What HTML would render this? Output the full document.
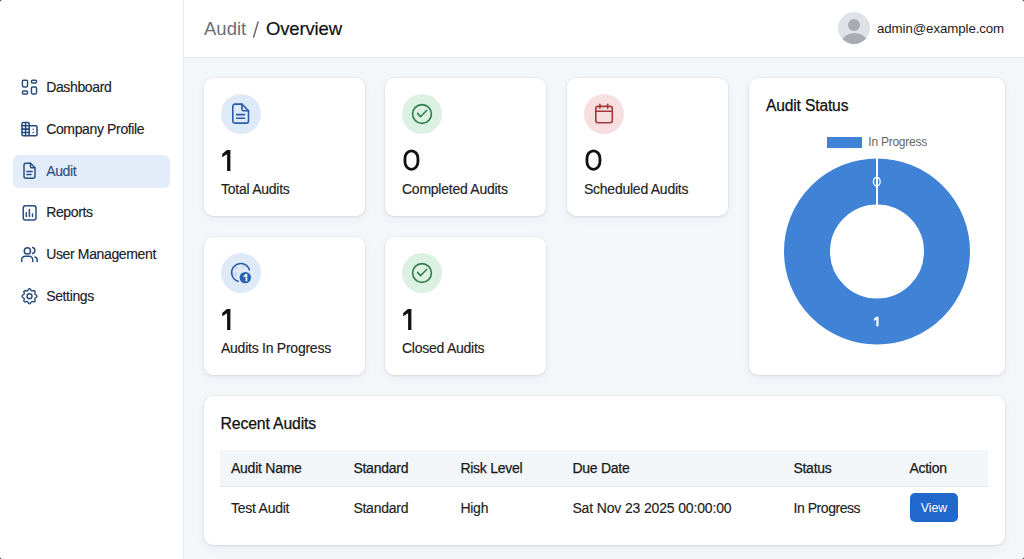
<!DOCTYPE html>
<html><head><meta charset="utf-8">
<style>
*{margin:0;padding:0;box-sizing:border-box}
html,body{width:1024px;height:559px;overflow:hidden}
body{background:#f4f7fa;font-family:"Liberation Sans",sans-serif;color:#1c1d1f;position:relative}
.abs{position:absolute;white-space:nowrap;line-height:1}
#side{position:absolute;left:0;top:0;width:184px;height:559px;background:#fff;border-right:1px solid #e7eaed}
#head{position:absolute;left:184px;top:0;width:840px;height:58px;background:#fff;border-bottom:1px solid #e6e9ec}
.nav{font-size:14px;letter-spacing:-0.36px;color:#202124;-webkit-text-stroke:0.15px currentColor}
.ico{position:absolute;width:16px;height:16px}
.pill{position:absolute;left:12.5px;top:154.5px;width:157.5px;height:33px;background:#e2edf9;border-radius:6px}
.card{position:absolute;background:#fff;border-radius:9px;box-shadow:0 0 0 1px rgba(20,30,50,0.035),0 1px 3px rgba(20,30,50,0.06),0 3px 10px rgba(20,30,50,0.05)}
.circ{position:absolute;width:40px;height:40px;border-radius:50%}
.num{font-size:30px;color:#111}
.lbl{font-size:14px;letter-spacing:-0.25px;color:#222;-webkit-text-stroke:0.15px #222}
.th{font-size:14px;letter-spacing:-0.25px;color:#1a1a1a;-webkit-text-stroke:0.25px #1a1a1a}
.td{font-size:14px;letter-spacing:-0.25px;color:#222;-webkit-text-stroke:0.15px #222}
</style></head><body>
<div id="side"></div>
<div id="head"></div>

<!-- breadcrumb -->
<div class="abs" style="left:204px;top:20.1px;font-size:18.5px;color:#6a6e75">Audit</div>
<svg style="position:absolute;left:0;top:0" width="300" height="60"><path d="M258.1 22L253.6 37" stroke="#6a6e75" stroke-width="1.55" stroke-linecap="round"/></svg>
<div class="abs" style="left:266px;top:20.1px;font-size:18.5px;color:#111;letter-spacing:-0.15px;-webkit-text-stroke:0.2px #111">Overview</div>

<!-- avatar -->
<div style="position:absolute;left:838px;top:12px;width:32px;height:32px;border-radius:50%;background:#dfe2e6;overflow:hidden">
  <div style="position:absolute;left:10px;top:6.7px;width:12px;height:12.2px;border-radius:50%;background:#a8abb1"></div>
  <div style="position:absolute;left:3.5px;top:21px;width:25px;height:18px;border-radius:50%;background:#a8abb1"></div>
</div>
<div class="abs" style="left:877px;top:22px;font-size:13.3px;color:#1f2022;letter-spacing:-0.1px">admin@example.com</div>

<!-- sidebar -->
<div class="pill"></div>
<div class="abs nav" style="left:46.2px;top:80.1px">Dashboard</div>
<div class="abs nav" style="left:46.2px;top:122px">Company Profile</div>
<div class="abs nav" style="left:46.2px;top:163.6px;color:#2b4f80">Audit</div>
<div class="abs nav" style="left:46.2px;top:205.1px">Reports</div>
<div class="abs nav" style="left:46.2px;top:247px">User Management</div>
<div class="abs nav" style="left:46.2px;top:288.9px">Settings</div>

<!-- stat cards -->
<div class="card" style="left:204px;top:78px;width:161px;height:138px"></div>
<div class="card" style="left:385px;top:78px;width:161px;height:138px"></div>
<div class="card" style="left:567px;top:78px;width:161px;height:138px"></div>
<div class="card" style="left:204px;top:237px;width:161px;height:138px"></div>
<div class="card" style="left:385px;top:237px;width:161px;height:138px"></div>

<div class="circ" style="left:221px;top:94px;background:#dfeaf8"></div>
<div class="circ" style="left:402px;top:94px;background:#dcf1e2"></div>
<div class="circ" style="left:584px;top:94px;background:#f8dfdf"></div>
<div class="circ" style="left:221px;top:253px;background:#dfeaf8"></div>
<div class="circ" style="left:402px;top:253px;background:#dcf1e2"></div>


<div class="abs lbl" style="left:221px;top:182px">Total Audits</div>
<div class="abs lbl" style="left:402px;top:182px">Completed Audits</div>
<div class="abs lbl" style="left:584px;top:182px">Scheduled Audits</div>
<div class="abs lbl" style="left:221px;top:341px">Audits In Progress</div>
<div class="abs lbl" style="left:402px;top:341px">Closed Audits</div>

<!-- chart card -->
<div class="card" style="left:749px;top:78px;width:256px;height:297px"></div>
<div class="abs" style="left:766px;top:98px;font-size:15.6px;color:#111;letter-spacing:-0.15px;-webkit-text-stroke:0.25px #111">Audit Status</div>
<div style="position:absolute;left:827px;top:137.2px;width:35px;height:10.7px;background:#3f82d6"></div>
<div class="abs" style="left:868.3px;top:136.3px;font-size:12px;color:#666;letter-spacing:-0.25px">In Progress</div>
<svg style="position:absolute;left:0;top:0" width="1024" height="559">
  <circle cx="877" cy="251.5" r="70" fill="none" stroke="#3f82d6" stroke-width="46"/>
  <line x1="877" y1="157" x2="877" y2="205" stroke="#fff" stroke-width="2"/>
  <rect x="873.5" y="177.5" width="6.6" height="8.4" rx="3.3" ry="3.6" fill="none" stroke="#fff" stroke-width="1.3"/>
  <path d="M876.2 316.8H878.5V326.3H876.3V319.6L873.9 321V318.8Z" fill="#fff"/>
</svg>

<!-- recent audits -->
<div class="card" style="left:204px;top:396px;width:801px;height:149px"></div>
<div class="abs" style="left:220.5px;top:416px;font-size:15.8px;color:#111;letter-spacing:-0.15px;-webkit-text-stroke:0.25px #111">Recent Audits</div>
<div style="position:absolute;left:220px;top:450px;width:768px;height:37px;background:#f3f6f9;border-bottom:1px solid #e4e7eb"></div>
<div class="abs th" style="left:231px;top:461px">Audit Name</div>
<div class="abs th" style="left:353.4px;top:461px">Standard</div>
<div class="abs th" style="left:460.4px;top:461px">Risk Level</div>
<div class="abs th" style="left:572.4px;top:461px">Due Date</div>
<div class="abs th" style="left:793.4px;top:461px">Status</div>
<div class="abs th" style="left:909.4px;top:461px">Action</div>
<div class="abs td" style="left:231px;top:501px">Test Audit</div>
<div class="abs td" style="left:353.4px;top:501px">Standard</div>
<div class="abs td" style="left:460.4px;top:501px">High</div>
<div class="abs td" style="left:572.4px;top:501px;letter-spacing:-0.15px">Sat Nov 23 2025 00:00:00</div>
<div class="abs td" style="left:793.5px;top:501px;letter-spacing:-0.45px">In Progress</div>
<div style="position:absolute;left:910px;top:493px;width:48px;height:29px;background:#2068cc;border-radius:5px"></div>
<div class="abs" style="left:910px;top:501.6px;width:48px;text-align:center;font-size:12.4px;color:#fff">View</div>


<!-- icons -->
<svg style="position:absolute;left:0;top:0" width="1024" height="559" fill="none" stroke-linecap="round" stroke-linejoin="round">
 <g stroke="#264d80" stroke-width="1.55">
  <!-- dashboard -->
  <rect x="22.45" y="80.25" width="5.1" height="6.7" rx="1.1" stroke-width="1.45"/>
  <rect x="31.45" y="80.25" width="5.1" height="2.7" rx="1" stroke-width="1.45"/>
  <rect x="22.45" y="91.05" width="5.1" height="2.9" rx="1" stroke-width="1.45"/>
  <rect x="31.45" y="87.05" width="5.1" height="6.9" rx="1.1" stroke-width="1.45"/>
  <!-- building -->
  <rect x="22" y="122.5" width="7.2" height="13.3" rx="1.3"/>
  <path d="M25.6 122.5V135.8M22 125.8H29.2M22 129.1H29.2M22 132.4H29.2"/>
  <path d="M29.2 125.8H36a1 1 0 0 1 1 1V134.8a1 1 0 0 1 -1 1H29.2"/>
 </g>
 <g fill="#264d80"><circle cx="33.3" cy="129.3" r="0.8"/><circle cx="33.3" cy="132.5" r="0.8"/></g>
 <g stroke="#2b5286" stroke-width="1.5">
  <!-- file -->
  <path d="M30.5 163.25H26a2 2 0 0 0 -2 2V176.25a2 2 0 0 0 2 2H33a2 2 0 0 0 2 -2V167.75Z"/>
  <path d="M30.5 163.25V166.75a1 1 0 0 0 1 1H35"/>
  <path d="M26.9 171.5H32.1M26.9 174.5H31"/>
 </g>
 <g stroke="#264d80" stroke-width="1.5">
  <!-- reports -->
  <rect x="23.25" y="205.75" width="12.75" height="14.25" rx="2.3"/>
  <path d="M26.3 212.8V216.6M29.4 209.5V216.6M32.5 214V216.6"/>
  <!-- users -->
  <circle cx="27.4" cy="250.9" r="3.1"/>
  <path d="M32.6 247.6a3.1 3.1 0 0 1 0 6"/>
  <path d="M21.7 261.4V259.6a3.4 3.4 0 0 1 3.4 -3.4H29.3a3.4 3.4 0 0 1 3.4 3.4V261.4"/>
  <path d="M37.2 261.4V260a3 3 0 0 0 -2.3 -3"/>
 </g>
 <!-- gear -->
 <g transform="translate(19.6 286.35) scale(0.825)" stroke="#264d80" stroke-width="1.75">
  <path d="M10.325 4.317c.426 -1.756 2.924 -1.756 3.35 0a1.724 1.724 0 0 0 2.573 1.066c1.543 -.94 3.31 .826 2.37 2.37a1.724 1.724 0 0 0 1.065 2.572c1.756 .426 1.756 2.924 0 3.35a1.724 1.724 0 0 0 -1.066 2.573c.94 1.543 -.826 3.31 -2.37 2.37a1.724 1.724 0 0 0 -2.572 1.065c-.426 1.756 -2.924 1.756 -3.35 0a1.724 1.724 0 0 0 -2.573 -1.066c-1.543 .94 -3.310 -.826 -2.37 -2.37a1.724 1.724 0 0 0 -1.065 -2.572c-1.756 -.426 -1.756 -2.924 0 -3.35a1.724 1.724 0 0 0 1.066 -2.573c-.94 -1.543 .826 -3.31 2.37 -2.37c1 .608 2.296 .07 2.572 -1.065z"/>
  <circle cx="12" cy="12" r="3"/>
 </g>

 <path transform="translate(0 0)" d="M226.9 150H230.4V171H227.1V154.3L222.2 157.3V153.9Z" fill="#111"/>
<path transform="translate(0 159)" d="M226.9 150H230.4V171H227.1V154.3L222.2 157.3V153.9Z" fill="#111"/>
<path transform="translate(181 159)" d="M226.9 150H230.4V171H227.1V154.3L222.2 157.3V153.9Z" fill="#111"/>
 <rect x="404.95" y="150.8" width="13" height="18.6" rx="6.5" ry="7.6" fill="none" stroke="#111" stroke-width="2.8"/>
<rect x="586.95" y="150.8" width="13" height="18.6" rx="6.5" ry="7.6" fill="none" stroke="#111" stroke-width="2.8"/>
 <!-- card: file -->
 <g stroke="#2a5ea8" stroke-width="1.6">
  <path d="M241.9 104.15H235a2.2 2.2 0 0 0 -2.2 2.2V120.9a2.2 2.2 0 0 0 2.2 2.2H246.3a2.2 2.2 0 0 0 2.2 -2.2V110.75Z"/>
  <path d="M241.9 104.15V109.3a1.4 1.4 0 0 0 1.4 1.4H248.5"/>
  <path d="M236.6 114.6H244.5M236.6 118.2H244.5"/>
 </g>
 <!-- card: check circles -->
 <g stroke="#2f7d4d" stroke-width="1.6">
  <circle cx="422" cy="114" r="9.4"/>
  <path d="M417.6 113.4L420.5 116.7L426.6 110.5"/>
  <circle cx="422" cy="273" r="9.4"/>
  <path d="M417.6 272.4L420.5 275.7L426.6 269.5"/>
 </g>
 <!-- card: calendar -->
 <g stroke="#a23a3c" stroke-width="1.6">
  <rect x="595.8" y="106.4" width="16.5" height="16.3" rx="2.2"/>
  <path d="M595.8 111.2H612.3M599.9 104.3V108.3M607.7 104.3V108.3"/>
 </g>
 <!-- card: in progress -->
 <g stroke="#2a5ea8" stroke-width="1.6">
  <path d="M238.14 281.3A9.1 9.1 0 1 1 249.43 269.71"/>
 </g>
 <g fill="#c9d6e6">
  <circle cx="237" cy="268" r="1.6"/><circle cx="243.5" cy="266.5" r="1.2"/><ellipse cx="235.5" cy="274" rx="1.3" ry="2.5"/>
 </g>
 <circle cx="245.3" cy="277.6" r="6.9" fill="#dfeaf8"/>
 <circle cx="245.3" cy="277.6" r="5.7" fill="#2a62b3"/>
 <path d="M245.6 273.9H247.3V281.3H245.6V276.3L243.6 277.4V275.7Z" fill="#fff"/>
</svg>
<svg style="position:absolute;left:0;top:0" width="1024" height="559">
 <path d="M0 0H2A2 2 0 0 0 0 2Z" fill="#000"/>
 <path d="M1024 0H1022A2 2 0 0 1 1024 2Z" fill="#000"/>
 <path d="M0 559H2A2 2 0 0 1 0 557Z" fill="#000"/>
 <path d="M1024 559H1022A2 2 0 0 0 1024 557Z" fill="#000"/>
</svg>
</body></html>
